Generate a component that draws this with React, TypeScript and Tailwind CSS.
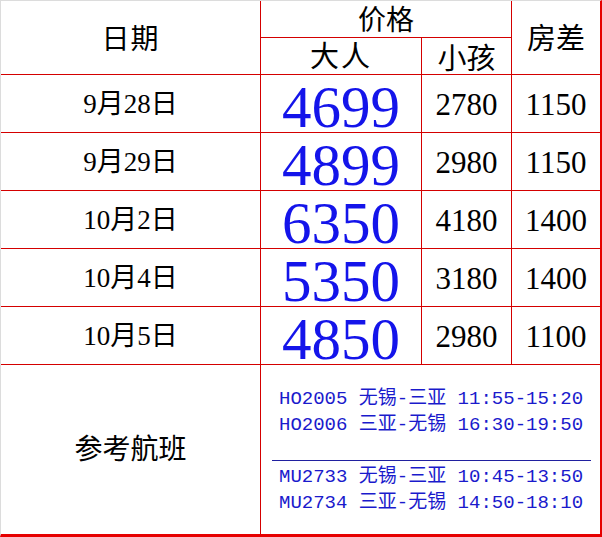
const serif = { fontFamily: '"Liberation Serif", "Noto Sans CJK SC", serif' };

const rows = [
  { date: '9月28日', adult: '4699', child: '2780', room: '1150' },
  { date: '9月29日', adult: '4899', child: '2980', room: '1150' },
  { date: '10月2日', adult: '6350', child: '4180', room: '1400' },
  { date: '10月4日', adult: '5350', child: '3180', room: '1400' },
  { date: '10月5日', adult: '4850', child: '2980', room: '1100' },
];

const flights = [
  ['HO2005 无锡-三亚 11:55-15:20', 'HO2006 三亚-无锡 16:30-19:50'],
  ['MU2733 无锡-三亚 10:45-13:50', 'MU2734 三亚-无锡 14:50-18:10'],
];

export default function App() {
  return (
    <div
      className="w-[602px] h-[537px] bg-white text-black border-t border-l border-t-[#dcdcdc] border-l-[#dcdcdc] border-r-2 border-r-[#e60000] border-b-[3px] border-b-[#e60000]"
      style={serif}
    >
      <div className="grid grid-cols-[260px_161px_90px_88px] grid-rows-[37px_37px_58px_58px_58px_58px_58px_169px]">
        {/* header */}
        <div className="row-span-2 flex items-center justify-center border-r border-b border-[#d40000] pt-1 text-[28px] tracking-[1px]">
          日期
        </div>
        <div className="col-span-2 flex items-center justify-center border-r border-b border-[#d40000] pt-1 text-[28px]">
          价格
        </div>
        <div className="row-span-2 flex items-center justify-center border-b border-[#d40000] pt-1 text-[29px]">
          房差
        </div>
        <div className="flex items-center justify-center border-r border-b border-[#d40000] pt-1 text-[29px] tracking-[2px]">
          大人
        </div>
        <div className="flex items-center justify-center border-r border-b border-[#d40000] pt-2 text-[29px]">
          小孩
        </div>

        {/* price rows */}
        {rows.map((r) => (
          <div key={r.date} className="contents">
            <div className="flex items-center justify-center border-r border-b border-[#d40000] pt-0.5 text-[27px]">
              {r.date}
            </div>
            <div className="flex items-center justify-center border-r border-b border-[#d40000] pt-2 text-[59px] leading-none text-[#1414ea]">
              {r.adult}
            </div>
            <div className="flex items-center justify-center border-r border-b border-[#d40000] pt-0.5 text-[31px] leading-none">
              {r.child}
            </div>
            <div className="flex items-center justify-center border-b border-[#d40000] pt-0.5 text-[31px] leading-none">
              {r.room}
            </div>
          </div>
        ))}

        {/* flights */}
        <div className="flex items-center justify-center border-r border-[#d40000] text-[28px]">
          参考航班
        </div>
        <div
          className="col-span-3 pt-[21px] text-[19px] leading-[26px] whitespace-pre text-[#1a1acc]"
          style={{ fontFamily: '"Liberation Mono", "Noto Sans CJK SC", monospace' }}
        >
          {flights[0].map((f) => (
            <div key={f} className="pl-[18px]">{f}</div>
          ))}
          <div className="ml-[11px] mr-[9px] mt-[22px] mb-[3px] h-px bg-[#2020a0]" />
          {flights[1].map((f) => (
            <div key={f} className="pl-[18px]">{f}</div>
          ))}
        </div>
      </div>
    </div>
  );
}
